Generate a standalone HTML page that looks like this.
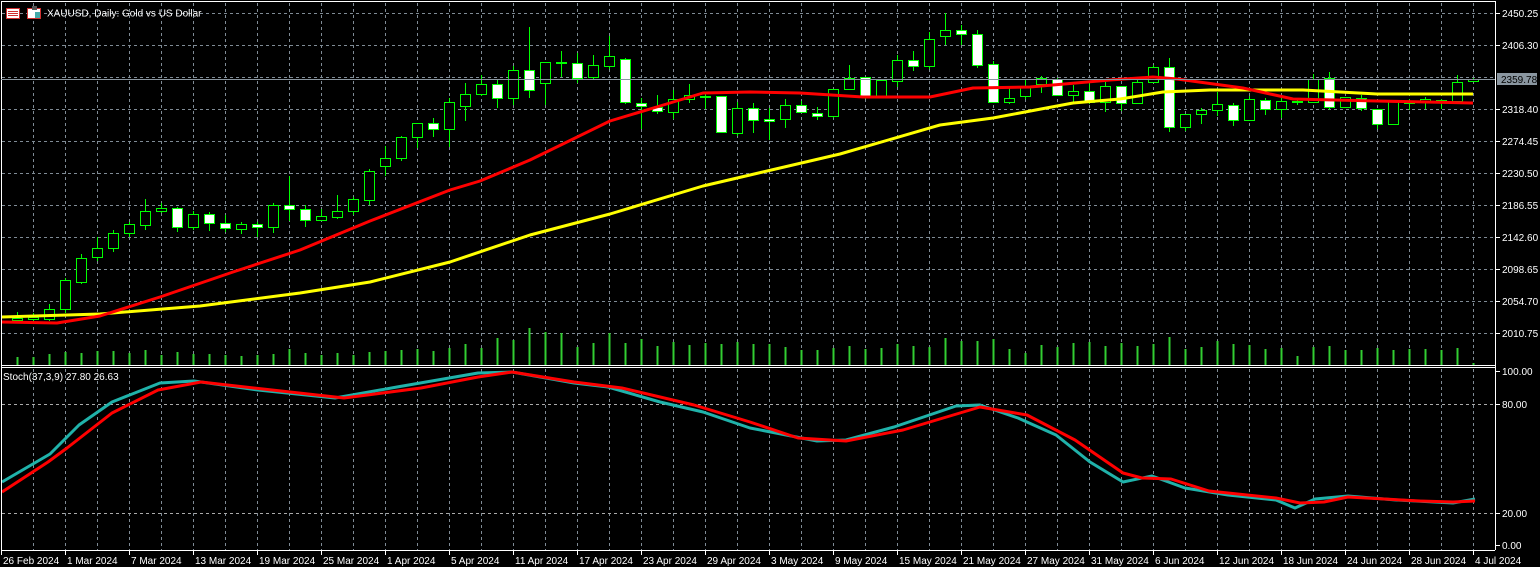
<!DOCTYPE html>
<html><head><meta charset="utf-8"><style>
html,body{margin:0;padding:0;background:#000;width:1540px;height:567px;overflow:hidden}
svg{display:block}
text{font-family:"Liberation Sans",sans-serif;font-size:10px;fill:#fff}
</style></head><body>
<svg id="s" width="1540" height="567" xmlns="http://www.w3.org/2000/svg">
<rect width="1540" height="567" fill="#000"/>
<g id="grid"></g>
<g id="vol"></g>
<g id="cand"></g>
<g id="lines"></g>
<!-- borders -->
<line x1="1" y1="1.5" x2="1495" y2="1.5" stroke="#fff"/>
<line x1="1.5" y1="1" x2="1.5" y2="550" stroke="#fff"/>
<line x1="1495.5" y1="1" x2="1495.5" y2="550" stroke="#fff"/>
<line x1="1" y1="365.5" x2="1495" y2="365.5" stroke="#fff"/>
<line x1="1" y1="367.5" x2="1495" y2="367.5" stroke="#fff"/>
<line x1="1" y1="550.5" x2="1495" y2="550.5" stroke="#fff"/>
<line x1="1" y1="79.5" x2="1495" y2="79.5" stroke="#8a96a0"/>
<!-- title -->
<rect x="6.5" y="8.5" width="13" height="10" fill="#fff" stroke="#d03030"/>
<line x1="8" y1="11.5" x2="18" y2="11.5" stroke="#d03030"/><line x1="8" y1="13.5" x2="18" y2="13.5" stroke="#d03030"/><line x1="8" y1="15.5" x2="18" y2="15.5" stroke="#d03030"/>
<rect x="27.5" y="8.5" width="13" height="10" fill="#fff" stroke="#d03030"/>
<rect x="32" y="6" width="5" height="4" fill="#555"/>
<rect x="35" y="12" width="5" height="6" fill="#4aa"/>
<text x="47" y="16.5">XAUUSD, Daily:  Gold vs US Dollar</text>
<text x="3" y="380">Stoch(37,3,9) 27.80 26.63</text>
<g id="ax"></g>
<rect x="1497" y="73" width="40" height="12" fill="#8a96a0"/>
<text x="1501" y="83" fill="#000" style="fill:#000">2359.78</text>
</svg>
<script>
const NS="http://www.w3.org/2000/svg";
function el(p,t,a){const e=document.createElementNS(NS,t);for(const k in a)e.setAttribute(k,a[k]);document.getElementById(p).appendChild(e);return e;}
// grid
for(let x=33;x<=1473;x+=32){el("grid","line",{x1:x+.5,y1:3,x2:x+.5,y2:365,stroke:"#7f8b95","stroke-dasharray":"3,3"});el("grid","line",{x1:x+.5,y1:369,x2:x+.5,y2:550,stroke:"#7f8b95","stroke-dasharray":"3,3"});}
for(let y=13;y<=333;y+=32){el("grid","line",{x1:2,y1:y+.5,x2:1495,y2:y+.5,stroke:"#7f8b95","stroke-dasharray":"3,3"});}
[404,513].forEach(y=>el("grid","line",{x1:2,y1:y+.5,x2:1495,y2:y+.5,stroke:"#aaa","stroke-dasharray":"3,3"}));
// axis labels
const pl=[["2450.25",13],["2406.30",45],["2318.40",109],["2274.45",141],["2230.50",173],["2186.55",205],["2142.60",237],["2098.65",269],["2054.70",301],["2010.75",333],["100.00",371],["80.00",404],["20.00",513],["0.00",545]];
pl.forEach(([t,y])=>{el("ax","line",{x1:1495,y1:y+.5,x2:1500,y2:y+.5,stroke:"#fff"});const e=el("ax","text",{x:1502,y:y+4});e.textContent=t;});
const dl=["26 Feb 2024","1 Mar 2024","7 Mar 2024","13 Mar 2024","19 Mar 2024","25 Mar 2024","1 Apr 2024","5 Apr 2024","11 Apr 2024","17 Apr 2024","23 Apr 2024","29 Apr 2024","3 May 2024","9 May 2024","15 May 2024","21 May 2024","27 May 2024","31 May 2024","6 Jun 2024","12 Jun 2024","18 Jun 2024","24 Jun 2024","28 Jun 2024","4 Jul 2024"];
dl.forEach((t,i)=>{const x=i==0?1:1+64*i;el("ax","line",{x1:x+.5,y1:550,x2:x+.5,y2:555,stroke:"#fff"});const e=el("ax","text",{x:x+2,y:564});e.textContent=t;});
// candles [top,bottom,high,low,bear]
const C=[[318,320,312,322,0],[317,319,313,322,0],[309,319,304,321,0],[280,309,278,313,0],[258,282,254,284,0],[248,257,237,261,0],[233,248,230,252,0],[224,233,222,237,0],[211,225,199,230,0],[208,211,203,213,0],
[208,227,207,232,1],[214,227,211,230,0],[214,223,212,231,1],[223,228,215,232,1],[224,229,222,234,0],[224,227,222,237,1],[205,227,203,233,0],[205,209,176,221,1],[209,220,205,227,1],[216,220,209,221,0],
[211,217,195,219,0],[199,211,197,215,0],[171,200,169,205,0],[158,166,146,176,0],[137,158,136,161,0],[123,137,123,148,0],[123,129,118,137,1],[102,129,98,147,0],[94,106,83,121,0],[84,94,75,96,0],
[84,98,79,108,1],[70,98,66,105,0],[70,90,27,98,1],[62,83,62,105,0],[62,63,51,77,0],[63,78,53,83,1],[65,77,55,79,0],[56,66,36,69,0],[59,102,58,104,1],[103,106,98,129,1],
[107,111,95,114,1],[99,112,90,119,0],[95,99,84,103,0],[96,97,93,109,0],[96,132,96,133,1],[108,133,102,136,0],[108,120,103,133,1],[119,121,108,140,1],[105,119,99,128,0],[105,112,101,113,1],
[113,116,107,120,1],[89,116,89,118,0],[78,89,65,90,0],[77,97,77,99,1],[80,96,80,97,0],[60,81,55,87,0],[60,66,51,71,1],[39,66,32,69,0],[30,36,13,45,0],[30,34,25,45,1],
[34,65,30,68,1],[64,102,61,103,1],[98,102,88,104,0],[86,96,80,99,0],[78,84,76,93,0],[79,95,78,96,1],[91,95,85,104,0],[91,102,83,104,1],[86,102,82,112,0],[86,103,86,111,1],
[82,103,80,103,0],[67,82,65,83,0],[67,127,58,132,1],[114,127,114,131,0],[110,114,108,124,0],[104,110,92,116,0],[105,120,103,126,1],[99,120,96,120,0],[100,109,98,115,1],[101,109,98,118,0],
[101,102,98,105,0],[79,102,74,102,0],[78,107,72,110,1],[97,107,97,107,0],[98,108,95,111,1],[109,124,109,129,1],[100,124,100,125,0],[101,103,99,110,0],[99,101,97,109,0],[100,101,99,109,0],
[82,101,75,101,0],[79,81,78,81,0]];
const V=[357,357,354,352,353,351,351,353,350,355,352,354,354,355,356,355,354,349,353,355,353,355,352,351,350,349,351,348,344,348,338,340,328,332,333,347,343,333,343,339,346,342,345,343,344,342,344,344,347,350,350,348,346,349,348,344,346,347,338,341,341,339,349,353,345,347,343,342,346,343,346,344,337,349,347,341,344,345,349,348,356,347,346,350,350,348,350,349,349,350,348,363];
C.forEach((c,i)=>{const x=17+16*i;const [t,b,h,l,bear]=c;
el("cand","line",{x1:x+.5,y1:h,x2:x+.5,y2:l,stroke:"#00ff00"});
el("cand","rect",{x:x-4.5,y:t+.5,width:10,height:Math.max(b-t,1),fill:bear?"#fff":"#000",stroke:"#00ff00"});
el("vol","rect",{x:x-0.5,y:V[i],width:2,height:365-V[i],fill:"#32cd32"});});
function pl2(pts,col,w){el("lines","polyline",{points:pts.map(p=>p.join(",")).join(" "),fill:"none",stroke:col,"stroke-width":w,"stroke-linejoin":"round"});}
pl2([[2,317],[100,314],[200,306],[300,293],[370,282],[450,262],[530,235],[610,214],[703,186],[750,175],[840,154],[940,125],[993,118],[1073,103],[1120,99],[1163,92],[1210,90],[1303,90],[1377,94],[1473,94]],"#ffff00",3);
pl2([[2,322],[57,323],[100,316],[160,297],[233,272],[300,250],[370,221],[450,190],[480,181],[530,160],[610,121],[660,106],[703,93],[750,92],[800,93],[863,97],[930,97],[973,88],[1030,87],[1110,80],[1153,77],[1177,79],[1243,88],[1293,99],[1377,101],[1473,103]],"#ff0000",3);
pl2([[2,482],[50,454],[79,425],[112,402],[160,383],[194,381],[258,390],[335,398],[397,387],[478,373],[512,372],[574,383],[608,387],[660,402],[703,412],[750,428],[817,441],[846,440],[894,427],[956,406],[980,405],[1018,418],[1056,435],[1090,462],[1123,482],[1152,476],[1185,488],[1228,495],[1276,500],[1295,508],[1315,499],[1348,496],[1396,500],[1453,503],[1475,499]],"#20b2aa",3);
pl2([[2,492],[48,462],[67,448],[112,413],[158,390],[201,382],[263,389],[344,398],[421,388],[478,377],[512,372],[574,382],[622,388],[694,405],[750,422],[798,438],[846,441],[903,430],[980,407],[1027,415],[1075,440],[1123,473],[1142,478],[1171,479],[1209,491],[1276,498],[1300,503],[1324,502],[1348,497],[1420,501],[1453,502],[1475,501]],"#ff0000",3);
</script>
</body></html>
